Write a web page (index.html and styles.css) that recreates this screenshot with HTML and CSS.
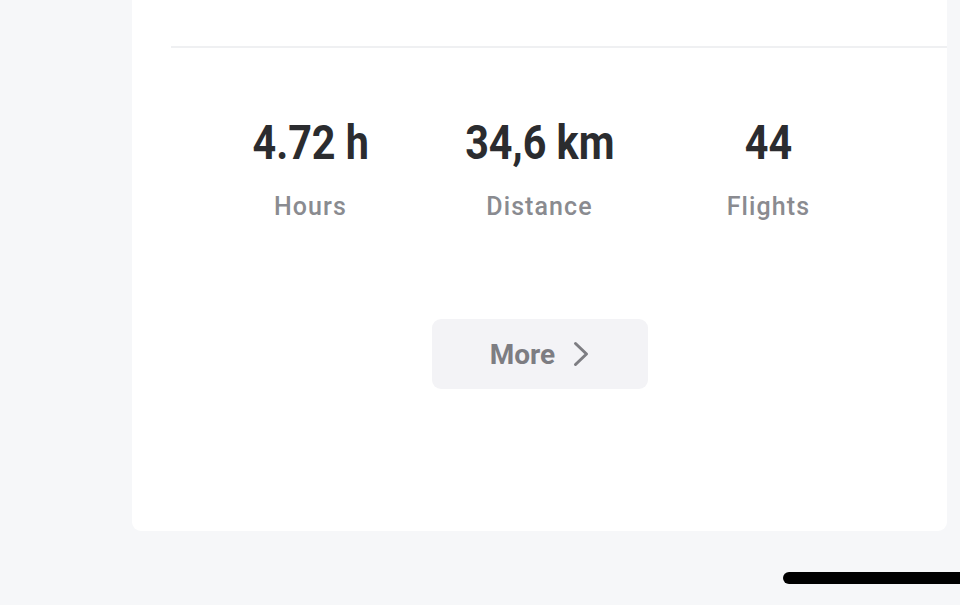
FILE: index.html
```html
<!DOCTYPE html>
<html>
<head>
<meta charset="utf-8">
<link rel="stylesheet" href="styles.css">
</head>
<body>
<div class="screen">
  <section class="card">
    <div class="divider"></div>
    <div class="stats">
      <div class="stat">
        <div class="value">4.72 h</div>
        <div class="label">Hours</div>
      </div>
      <div class="stat">
        <div class="value">34,6 km</div>
        <div class="label">Distance</div>
      </div>
      <div class="stat">
        <div class="value">44</div>
        <div class="label">Flights</div>
      </div>
    </div>
    <div class="actions">
      <button class="more"><span>More</span>
        <svg class="chev" width="16" height="26" viewBox="0 0 16 26"><path d="M2.5 2.5 L13.5 13 L2.5 23.5" fill="none" stroke="#7d7d82" stroke-width="3" stroke-linecap="round" stroke-linejoin="round"/></svg>
      </button>
    </div>
  </section>
  <div class="home-indicator"></div>
</div>
</body>
</html>
```
FILE: styles.css
```css
* { box-sizing: border-box; }
html, body { margin: 0; padding: 0; }
body {
  background: #f6f7f9;
  font-family: Roboto, "Liberation Sans", sans-serif;
  width: 960px;
  height: 605px;
  overflow: hidden;
}
.screen {
  position: relative;
  width: 960px;
  height: 605px;
}
.card {
  margin-left: 132px;
  width: 815px;
  height: 531px;
  background: #ffffff;
  border-radius: 0 0 9px 9px;
  padding-top: 46px;
}
.divider {
  margin-left: 39px;
  height: 2px;
  background: #eff0f2;
}
.stats {
  display: grid;
  grid-template-columns: repeat(3, 229px);
  justify-content: center;
  margin-top: 67px;
}
.stat {
  display: flex;
  flex-direction: column;
  align-items: center;
}
.value {
  font-size: 48px;
  font-weight: 700;
  line-height: 56px;
  color: #2b2c2f;
  transform: scaleX(0.86);
  white-space: nowrap;
}
.label {
  margin-top: 21px;
  font-size: 25px;
  font-weight: 500;
  line-height: 30px;
  letter-spacing: 1.1px;
  color: #8a8b90;
}
.actions {
  display: flex;
  justify-content: center;
  margin-top: 97px;
}
.more {
  width: 216px;
  height: 70px;
  border: none;
  border-radius: 9px;
  background: #f3f3f6;
  font-family: Roboto, "Liberation Sans", sans-serif;
  font-size: 28px;
  font-weight: 700;
  color: #7d7d82;
  display: flex;
  align-items: center;
  justify-content: center;
  gap: 18px;
  padding: 0;
}
.chev { display: block; }
.home-indicator {
  position: absolute;
  left: 783px;
  top: 572px;
  width: 220px;
  height: 12px;
  border-radius: 6px;
  background: #000;
}
```
